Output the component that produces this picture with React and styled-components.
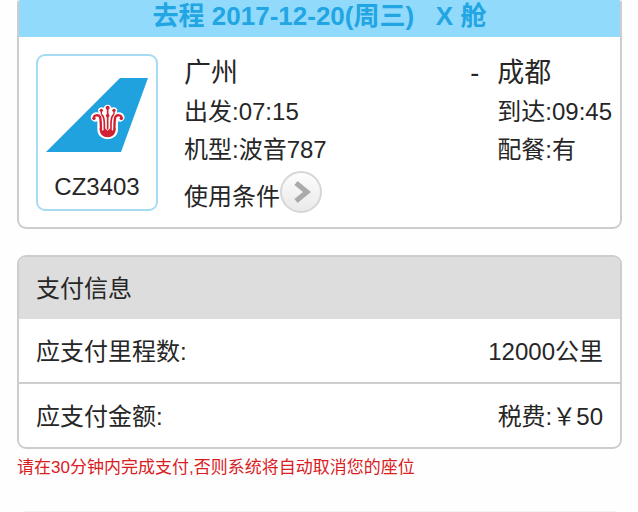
import React from 'react';
import styled, { createGlobalStyle } from 'styled-components';

const GlobalStyle = createGlobalStyle`
  * {
    box-sizing: border-box;
  }
  body {
    margin: 0;
    background-color: #fefefe;
    color: #262626;
    font-family: 'Liberation Sans', 'Noto Sans CJK SC', sans-serif;
    font-size: 24px;
  }
`;

const Page = styled.main`
  display: flex;
  flex-direction: column;
  padding: 0 16px 0 17px;
`;

const Card = styled.section`
  border: 2px solid #cdcdcd;
  border-radius: 9px;
  overflow: hidden;
  background-color: #fff;
`;

const FlightCard = styled(Card)`
  border-top: none;
  border-top-left-radius: 3px;
  border-top-right-radius: 3px;
  margin-bottom: 26px;
`;

const FlightTitle = styled.h1`
  margin: 0;
  padding-bottom: 5px;
  background-color: #91dafb;
  color: #22a5e3;
  font-size: 26px;
  line-height: 32px;
  text-align: center;
  white-space: pre;
`;

const FlightBody = styled.div`
  display: flex;
  padding: 17px 8px 14px 17px;
`;

const Airline = styled.div`
  display: flex;
  flex-direction: column;
  align-items: center;
  justify-content: space-between;
  width: 122px;
  height: 157px;
  margin-right: 26px;
  padding: 22px 0 4px;
  border: 2px solid #a5dcf3;
  border-radius: 9px;
  line-height: 36px;
`;

const Departure = styled.div`
  flex: 1;
`;

const Arrival = styled.div`
  margin-left: 18px;
`;

const City = styled.div`
  font-size: 27px;
  line-height: 39px;
`;

const Detail = styled.div`
  line-height: 38px;
`;

const Conditions = styled.div`
  display: flex;
  align-items: flex-end;
  margin-top: 2px;
  line-height: 32px;
`;

const RoundButton = styled.button`
  display: flex;
  width: 42px;
  height: 42px;
  padding: 0;
  border: 2px solid #d6d6d6;
  border-radius: 50%;
  background: linear-gradient(#fdfdfd, #e9e9e9);
  cursor: pointer;
`;

const PaymentTitle = styled.h2`
  margin: 0;
  padding: 2px 17px 0;
  background-color: #ddd;
  font-size: 24px;
  font-weight: normal;
  line-height: 60px;
`;

const PaymentList = styled.dl`
  margin: 0;
`;

const PaymentRow = styled.div`
  display: flex;
  justify-content: space-between;
  padding: 3px 17px 0;
  line-height: 60px;

  & + & {
    border-top: 2px solid #cdcdcd;
  }
`;

const Amount = styled.dd`
  margin: 0;
`;

const Warning = styled.p`
  margin: 0 0 24px;
  color: #d9201f;
  font-size: 17px;
  line-height: 38px;
`;

const Divider = styled.hr`
  width: calc(100% - 12px);
  height: 1px;
  margin: 0 auto;
  border: none;
  background-color: #f3f3f3;
`;

const payments = [
  { label: '应支付里程数:', amount: '12000公里' },
  { label: '应支付金额:', amount: '税费:￥50' }
];

const TailLogo = () => (
  <svg width="102" height="74" viewBox="0 0 102 74" aria-hidden="true">
    <path d="M74 0H102L75 74H0Z" fill="#20a2df" />
    {/* kapok flower */}
    <g transform="translate(39 20) scale(0.3333)" strokeLinecap="round" strokeLinejoin="round">
      <path
        d="M29 69C13 65 18 46 35 45L43 46L41 35C47 27 53 30 58 32C60 19 76 19 78 32C83 30 89 27 95 35L93 46L101 45C118 46 123 65 107 69L97 68V94C97 131 39 131 39 94V68Z"
        fill="#fff"
        stroke="#fff"
        strokeWidth="4"
      />
      <g fill="none" stroke="#d21f31" strokeWidth="7">
        <path d="M27 62C23 50 41 49 45 57C48 65 47 78 48 94" />
        <path d="M109 62C113 50 95 49 91 57C88 65 89 78 88 94" />
        <path d="M51 51C60 58 58 74 58 92" strokeWidth="5" />
        <path d="M85 51C76 58 78 74 78 92" strokeWidth="5" />
        <path d="M68 32V92" strokeWidth="5" />
        <path d="M49 38V48M87 38V48" strokeWidth="4" />
      </g>
      <g fill="#d21f31">
        <circle cx="27" cy="61" r="5" />
        <circle cx="109" cy="61" r="5" />
        <circle cx="49" cy="37" r="5" />
        <circle cx="68" cy="29" r="6" />
        <circle cx="87" cy="37" r="5" />
        <path d="M68 44L74 53L68 60L62 53Z" />
        <path d="M44 90L53 98L60 91L68 98L76 91L83 98L92 90C95 127 41 127 44 90Z" />
      </g>
    </g>
  </svg>
);

const App = () => {
  return (
    <>
      <GlobalStyle />
      <Page>
        <FlightCard>
          <FlightTitle>{'去程 2017-12-20(周三)   X 舱'}</FlightTitle>
          <FlightBody>
            <Airline>
              <TailLogo />
              <span>CZ3403</span>
            </Airline>
            <Departure>
              <City>广州</City>
              <Detail>出发:07:15</Detail>
              <Detail>机型:波音787</Detail>
              <Conditions>
                <span id="conditions">使用条件</span>
                <RoundButton type="button" aria-labelledby="conditions">
                  <svg width="38" height="38" viewBox="2 2 38 38" fill="none" aria-hidden="true">
                    <path d="M16 12L27 21L16 30" stroke="#aaa" strokeWidth="5" />
                  </svg>
                </RoundButton>
              </Conditions>
            </Departure>
            <City>-</City>
            <Arrival>
              <City>成都</City>
              <Detail>到达:09:45</Detail>
              <Detail>配餐:有</Detail>
            </Arrival>
          </FlightBody>
        </FlightCard>

        <Card>
          <PaymentTitle>支付信息</PaymentTitle>
          <PaymentList>
            {payments.map(item => (
              <PaymentRow key={item.label}>
                <dt>{item.label}</dt>
                <Amount>{item.amount}</Amount>
              </PaymentRow>
            ))}
          </PaymentList>
        </Card>
        <Warning>请在30分钟内完成支付,否则系统将自动取消您的座位</Warning>
        <Divider />
      </Page>
    </>
  );
};

export default App;
